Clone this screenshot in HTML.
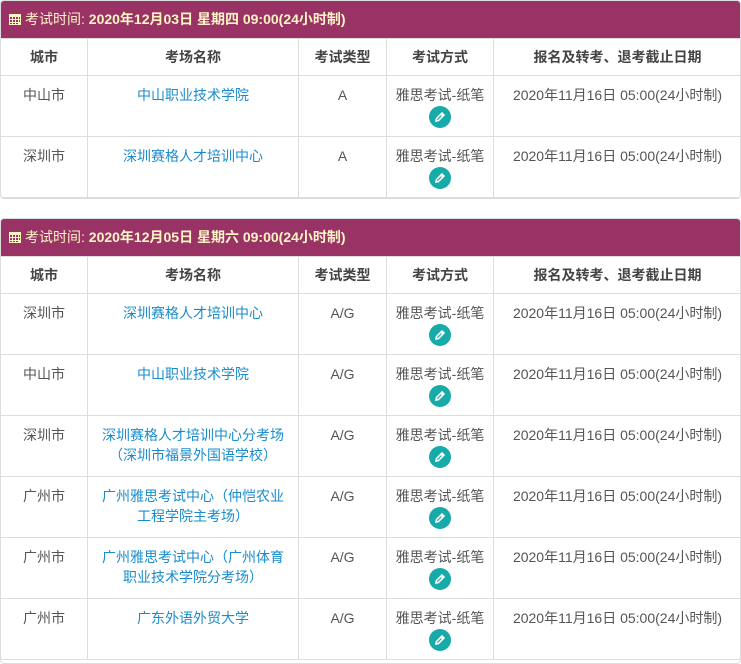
<!DOCTYPE html>
<html><head><meta charset="utf-8"><style>
body{margin:0;background:#fff;font-family:"Liberation Sans","Noto Sans CJK SC",sans-serif;font-size:14px;color:#555;width:741px;height:662px;overflow:hidden}
.box{position:absolute;left:0;width:741px;border:1px solid #ddd;border-radius:4px;box-sizing:border-box;overflow:hidden}
.bar{background:#993366;color:#fdf6c3;height:37px;line-height:37px;padding-left:8px;font-size:14px;white-space:nowrap}
.bar b{font-weight:bold}
.cal{display:inline-block;width:12px;height:12px;vertical-align:-1px;margin-right:4px}
table{border-collapse:collapse;table-layout:fixed;width:741px;margin-left:-1px}
td,th{border:1px solid #ddd;text-align:center;vertical-align:top;line-height:20px;padding:0}
th{height:36px;vertical-align:middle;font-weight:bold;color:#444}
td{height:60px;padding-top:9px;box-sizing:border-box}
tr.r td{height:61px}
a{color:#1a8ccc;text-decoration:none}
.ic{display:block;width:22px;height:22px;border-radius:50%;background:#16aaa8;margin:1px auto 0;position:relative}
.ic svg{position:absolute;left:5px;top:5px}
</style></head><body>
<div class="box" style="top:0;height:199px">
<div class="bar"><svg class="cal" viewBox="0 0 12 12"><g fill="#fdf6c3"><rect x="0" y="1" width="12" height="11"/></g><g fill="#993366"><rect x="1" y="4" width="2" height="2"/><rect x="4" y="4" width="2" height="2"/><rect x="7" y="4" width="2" height="2"/><rect x="10" y="4" width="1" height="2"/><rect x="1" y="7" width="2" height="2"/><rect x="4" y="7" width="2" height="2"/><rect x="7" y="7" width="2" height="2"/><rect x="10" y="7" width="1" height="2"/><rect x="1" y="10" width="2" height="1"/><rect x="4" y="10" width="2" height="1"/><rect x="7" y="10" width="2" height="1"/></g></svg>考试时间: <b>2020年12月03日 星期四 09:00(24小时制)</b></div>
<table>
<colgroup><col style="width:87px"><col style="width:211px"><col style="width:88px"><col style="width:107px"><col style="width:248px"></colgroup>
<tr><th>城市</th><th>考场名称</th><th>考试类型</th><th>考试方式</th><th>报名及转考、退考截止日期</th></tr>
<tr class="r"><td>中山市</td><td><a>中山职业技术学院</a></td><td>A</td><td>雅思考试-纸笔<span class="ic"><svg width="12" height="12" viewBox="0 0 12 12"><path d="M2 10 L2.5 7.5 L8 2 L10 4 L4.5 9.5 Z M7 3 L9 5" fill="none" stroke="#fff" stroke-width="1.6"/></svg></span></td><td>2020年11月16日 05:00(24小时制)</td></tr>
<tr class="r"><td>深圳市</td><td><a>深圳赛格人才培训中心</a></td><td>A</td><td>雅思考试-纸笔<span class="ic"><svg width="12" height="12" viewBox="0 0 12 12"><path d="M2 10 L2.5 7.5 L8 2 L10 4 L4.5 9.5 Z M7 3 L9 5" fill="none" stroke="#fff" stroke-width="1.6"/></svg></span></td><td>2020年11月16日 05:00(24小时制)</td></tr>
</table></div>

<div class="box" style="top:218px;height:446px">
<div class="bar"><svg class="cal" viewBox="0 0 12 12"><g fill="#fdf6c3"><rect x="0" y="1" width="12" height="11"/></g><g fill="#993366"><rect x="1" y="4" width="2" height="2"/><rect x="4" y="4" width="2" height="2"/><rect x="7" y="4" width="2" height="2"/><rect x="10" y="4" width="1" height="2"/><rect x="1" y="7" width="2" height="2"/><rect x="4" y="7" width="2" height="2"/><rect x="7" y="7" width="2" height="2"/><rect x="10" y="7" width="1" height="2"/><rect x="1" y="10" width="2" height="1"/><rect x="4" y="10" width="2" height="1"/><rect x="7" y="10" width="2" height="1"/></g></svg>考试时间: <b>2020年12月05日 星期六 09:00(24小时制)</b></div>
<table>
<colgroup><col style="width:87px"><col style="width:211px"><col style="width:88px"><col style="width:107px"><col style="width:248px"></colgroup>
<tr><th>城市</th><th>考场名称</th><th>考试类型</th><th>考试方式</th><th>报名及转考、退考截止日期</th></tr>
<tr class="r"><td>深圳市</td><td><a>深圳赛格人才培训中心</a></td><td>A/G</td><td>雅思考试-纸笔<span class="ic"><svg width="12" height="12" viewBox="0 0 12 12"><path d="M2 10 L2.5 7.5 L8 2 L10 4 L4.5 9.5 Z M7 3 L9 5" fill="none" stroke="#fff" stroke-width="1.6"/></svg></span></td><td>2020年11月16日 05:00(24小时制)</td></tr>
<tr class="r"><td>中山市</td><td><a>中山职业技术学院</a></td><td>A/G</td><td>雅思考试-纸笔<span class="ic"><svg width="12" height="12" viewBox="0 0 12 12"><path d="M2 10 L2.5 7.5 L8 2 L10 4 L4.5 9.5 Z M7 3 L9 5" fill="none" stroke="#fff" stroke-width="1.6"/></svg></span></td><td>2020年11月16日 05:00(24小时制)</td></tr>
<tr class="r"><td>深圳市</td><td><a>深圳赛格人才培训中心分考场<br>（深圳市福景外国语学校）</a></td><td>A/G</td><td>雅思考试-纸笔<span class="ic"><svg width="12" height="12" viewBox="0 0 12 12"><path d="M2 10 L2.5 7.5 L8 2 L10 4 L4.5 9.5 Z M7 3 L9 5" fill="none" stroke="#fff" stroke-width="1.6"/></svg></span></td><td>2020年11月16日 05:00(24小时制)</td></tr>
<tr class="r"><td>广州市</td><td><a>广州雅思考试中心（仲恺农业<br>工程学院主考场）</a></td><td>A/G</td><td>雅思考试-纸笔<span class="ic"><svg width="12" height="12" viewBox="0 0 12 12"><path d="M2 10 L2.5 7.5 L8 2 L10 4 L4.5 9.5 Z M7 3 L9 5" fill="none" stroke="#fff" stroke-width="1.6"/></svg></span></td><td>2020年11月16日 05:00(24小时制)</td></tr>
<tr class="r"><td>广州市</td><td><a>广州雅思考试中心（广州体育<br>职业技术学院分考场）</a></td><td>A/G</td><td>雅思考试-纸笔<span class="ic"><svg width="12" height="12" viewBox="0 0 12 12"><path d="M2 10 L2.5 7.5 L8 2 L10 4 L4.5 9.5 Z M7 3 L9 5" fill="none" stroke="#fff" stroke-width="1.6"/></svg></span></td><td>2020年11月16日 05:00(24小时制)</td></tr>
<tr class="r"><td>广州市</td><td><a>广东外语外贸大学</a></td><td>A/G</td><td>雅思考试-纸笔<span class="ic"><svg width="12" height="12" viewBox="0 0 12 12"><path d="M2 10 L2.5 7.5 L8 2 L10 4 L4.5 9.5 Z M7 3 L9 5" fill="none" stroke="#fff" stroke-width="1.6"/></svg></span></td><td>2020年11月16日 05:00(24小时制)</td></tr>
</table></div>
</body></html>
